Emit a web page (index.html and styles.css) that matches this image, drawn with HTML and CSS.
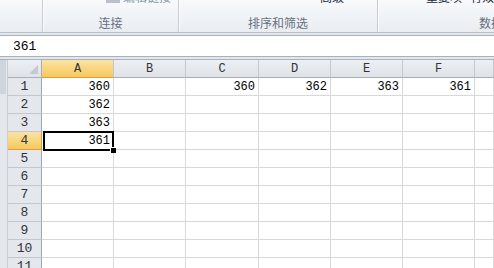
FILE: index.html
```html
<!DOCTYPE html>
<html lang="zh-CN">
<head>
  <meta charset="UTF-8">
  <title>Excel</title>
  <link rel="stylesheet" href="styles.css">
</head>
<body>
  <div class="ribbon">
    <div class="group g-first"></div>
    <div class="group g-conn">
      <div class="tools">
        <span class="tool dim"><span class="ico-link"></span>编辑链接</span>
      </div>
      <div class="label">连接</div>
    </div>
    <div class="group g-sort">
      <div class="tools">
        <span class="tool"><span class="ico-adv">…</span>高级</span>
      </div>
      <div class="label">排序和筛选</div>
    </div>
    <div class="group g-data">
      <div class="tools">
        <span class="tool">重复项</span>
        <span class="tool">有效性</span>
      </div>
      <div class="label">数据工具</div>
    </div>
  </div>

  <div class="band"></div>
  <div class="formula-bar">361</div>
  <div class="band"></div>

  <div class="sheet">
    <div class="side-strip"><div class="thumb"></div></div>
    <div class="grid">
      <div class="hdr corner"></div>
      <div class="hdr col active">A</div>
      <div class="hdr col">B</div>
      <div class="hdr col">C</div>
      <div class="hdr col">D</div>
      <div class="hdr col">E</div>
      <div class="hdr col">F</div>
      <div class="hdr col"></div>

      <div class="hdr row">1</div>
      <div class="cell">360</div><div class="cell"></div><div class="cell">360</div><div class="cell">362</div><div class="cell">363</div><div class="cell">361</div><div class="cell"></div>

      <div class="hdr row">2</div>
      <div class="cell">362</div><div class="cell"></div><div class="cell"></div><div class="cell"></div><div class="cell"></div><div class="cell"></div><div class="cell"></div>

      <div class="hdr row">3</div>
      <div class="cell">363</div><div class="cell"></div><div class="cell"></div><div class="cell"></div><div class="cell"></div><div class="cell"></div><div class="cell"></div>

      <div class="hdr row active">4</div>
      <div class="cell selected">361<span class="handle"></span></div><div class="cell"></div><div class="cell"></div><div class="cell"></div><div class="cell"></div><div class="cell"></div><div class="cell"></div>

      <div class="hdr row">5</div>
      <div class="cell"></div><div class="cell"></div><div class="cell"></div><div class="cell"></div><div class="cell"></div><div class="cell"></div><div class="cell"></div>

      <div class="hdr row">6</div>
      <div class="cell"></div><div class="cell"></div><div class="cell"></div><div class="cell"></div><div class="cell"></div><div class="cell"></div><div class="cell"></div>

      <div class="hdr row">7</div>
      <div class="cell"></div><div class="cell"></div><div class="cell"></div><div class="cell"></div><div class="cell"></div><div class="cell"></div><div class="cell"></div>

      <div class="hdr row">8</div>
      <div class="cell"></div><div class="cell"></div><div class="cell"></div><div class="cell"></div><div class="cell"></div><div class="cell"></div><div class="cell"></div>

      <div class="hdr row">9</div>
      <div class="cell"></div><div class="cell"></div><div class="cell"></div><div class="cell"></div><div class="cell"></div><div class="cell"></div><div class="cell"></div>

      <div class="hdr row">10</div>
      <div class="cell"></div><div class="cell"></div><div class="cell"></div><div class="cell"></div><div class="cell"></div><div class="cell"></div><div class="cell"></div>

      <div class="hdr row">11</div>
      <div class="cell"></div><div class="cell"></div><div class="cell"></div><div class="cell"></div><div class="cell"></div><div class="cell"></div><div class="cell"></div>
    </div>
  </div>
</body>
</html>
```

FILE: styles.css
```css
* {
  margin: 0;
  padding: 0;
  box-sizing: border-box;
}

body {
  width: 494px;
  height: 268px;
  overflow: hidden;
  background: #fff;
  font-family: "Noto Sans CJK SC", sans-serif;
}

/* ribbon */
.ribbon {
  display: flex;
  height: 33px;
  overflow: hidden;
  background: linear-gradient(#f7f9fb, #e9edf2);
  border-bottom: 1px solid #b9c0c9;
}

.group {
  flex: none;
  display: flex;
  flex-direction: column;
  align-items: center;
  height: 32px;
  border-right: 1px solid #c6ccd4;
  box-shadow: 1px 0 0 #fbfcfd;
}

.g-first { width: 43px; }
.g-conn { width: 136px; }
.g-sort { width: 199px; }
.g-data { width: 250px; border-right: none; box-shadow: none; }

.tools {
  height: 15px;
  display: flex;
  gap: 8px;
  margin-top: -11px;
  font-size: 12px;
  line-height: 15px;
  color: #1e2a3a;
  white-space: nowrap;
}

.g-conn .tools { margin-left: 56px; }
.g-sort .tools { margin-left: 94px; }
.g-data .tools { margin-left: -74px; }

.tool {
  display: flex;
  align-items: center;
  gap: 3px;
}

.tool.dim { color: #8a97ab; }

.ico-link {
  width: 14px;
  height: 4px;
  margin-top: 8px;
  background: #b8c0cb;
}

.ico-adv {
  font-size: 11px;
  color: #333;
}

.label {
  margin-top: 11px;
  font-size: 12px;
  line-height: 15px;
  color: #66707f;
}

/* formula bar */
.band {
  height: 2px;
  background: #e3e7ec;
}

.formula-bar {
  height: 22px;
  border-top: 1px solid #a9b1bb;
  border-bottom: 1px solid #a9b1bb;
  padding-left: 13px;
  font-family: "Liberation Mono", monospace;
  font-size: 13px;
  line-height: 21px;
  color: #000;
}

/* sheet */
.sheet {
  display: flex;
  border-top: 1px solid #a9b1bb;
  height: 210px;
}

.side-strip {
  width: 8px;
  flex: none;
  background: #e4e8ed;
  border-right: 1px solid #c9ced5;
}

.thumb {
  width: 6px;
  height: 34px;
  background: #cfd5dc;
}

.grid {
  flex: 1;
  display: grid;
  grid-template-columns: 34px 72px 72px 73px 72px 72px 72px 1fr;
  grid-auto-rows: 18px;
  font-family: "Liberation Mono", monospace;
  font-size: 12px;
  line-height: 18px;
}

.hdr {
  background: linear-gradient(#eceff3, #dfe3e8);
  color: #333;
  text-align: center;
  border-right: 1px solid #c3c8cf;
  border-bottom: 1px solid #a7afb9;
}

.corner {
  position: relative;
  border-right: 1px solid #a7afb9;
}

.corner::after {
  content: "";
  position: absolute;
  right: 3px;
  bottom: 3px;
  border-style: solid;
  border-width: 0 0 9px 9px;
  border-color: transparent transparent #c5cad1 transparent;
}

.hdr.row {
  background: #e4e8ed;
  border-right: 1px solid #9fa7b1;
  border-bottom: 1px solid #c3c8cf;
  font-size: 13px;
}

.hdr.active {
  background: linear-gradient(#fbe3a6, #f6c95a);
  border-bottom-color: #e19b3b;
}

.hdr.row.active {
  border-right-color: #e19b3b;
}

.cell {
  border-right: 1px solid #d8d8d8;
  border-bottom: 1px solid #d8d8d8;
  text-align: right;
  padding-right: 3px;
  color: #000;
}

.cell.selected {
  position: relative;
}

.cell.selected::after {
  content: "";
  position: absolute;
  top: -1px;
  left: 1px;
  right: -1px;
  bottom: -2px;
  border: 2px solid #000;
}

.handle {
  position: absolute;
  right: -3px;
  bottom: -4px;
  width: 6px;
  height: 6px;
  background: #000;
  border-left: 1px solid #fff;
  border-top: 1px solid #fff;
  z-index: 1;
}
```
